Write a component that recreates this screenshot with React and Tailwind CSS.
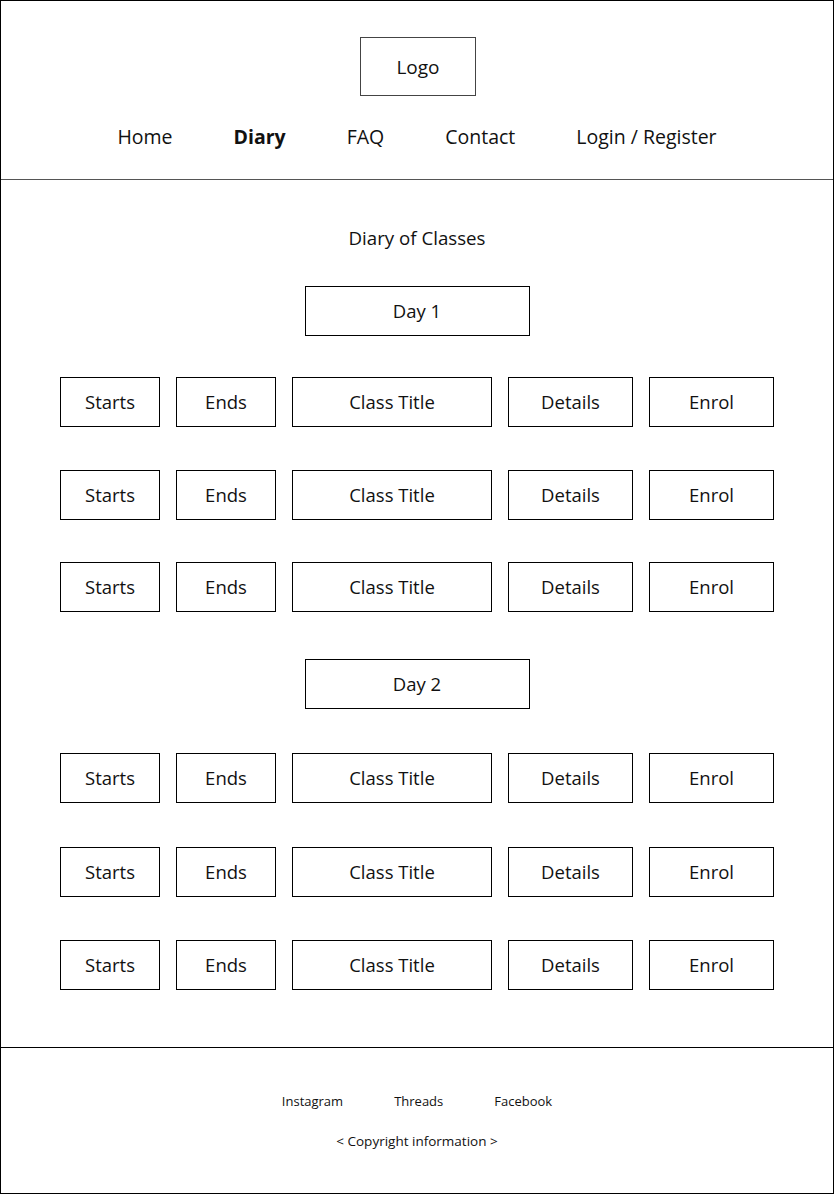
export default function App() {
  const Row = () => (
    <div className="flex justify-center gap-4 text-[18.5px] text-[#111]">
      <div className="w-[100px] h-[50px] border border-black flex items-center justify-center">Starts</div>
      <div className="w-[100px] h-[50px] border border-black flex items-center justify-center">Ends</div>
      <div className="w-[200px] h-[50px] border border-black flex items-center justify-center">Class Title</div>
      <div className="w-[125px] h-[50px] border border-black flex items-center justify-center">Details</div>
      <div className="w-[125px] h-[50px] border border-black flex items-center justify-center">Enrol</div>
    </div>
  );
  const Day = ({ label }) => (
    <div className="flex justify-center">
      <div className="w-[225px] h-[50px] border border-black flex items-center justify-center text-[18.5px] text-[#111]">
        {label}
      </div>
    </div>
  );
  return (
    <div className="w-[834px] h-[1194px] border border-black flex flex-col bg-white text-[#111] font-['Open_Sans',sans-serif]">
      <header className="h-[179px] border-b border-[#555] flex flex-col items-center pt-[36px]">
        <div className="w-[116px] h-[59px] border border-[#444] flex items-center justify-center pt-[2px] text-[19px] translate-x-[1px]">Logo</div>
        <nav className="mt-[29px] flex gap-[61px] text-[19.5px] leading-[24px]">
          <span>Home</span>
          <span className="font-bold">Diary</span>
          <span>FAQ</span>
          <span>Contact</span>
          <span>Login / Register</span>
        </nav>
      </header>
      <main className="flex-1 flex flex-col pt-[46px]">
        <div className="text-center text-[18.7px] leading-[24px]">Diary of Classes</div>
        <div className="mt-[36px]"><Day label="Day 1" /></div>
        <div className="mt-[41px] flex flex-col gap-[42.5px]">
          <Row />
          <Row />
          <Row />
        </div>
        <div className="mt-[47px]"><Day label="Day 2" /></div>
        <div className="mt-[44px] flex flex-col gap-[43.5px]">
          <Row />
          <Row />
          <Row />
        </div>
      </main>
      <footer className="h-[146px] border-t border-black flex flex-col items-center pt-[44px]">
        <div className="flex gap-[51px] text-[13px] leading-[18px]">
          <span>Instagram</span>
          <span>Threads</span>
          <span>Facebook</span>
        </div>
        <div className="mt-[22px] text-[13.5px] leading-[18px]">&lt; Copyright information &gt;</div>
      </footer>
    </div>
  );
}
